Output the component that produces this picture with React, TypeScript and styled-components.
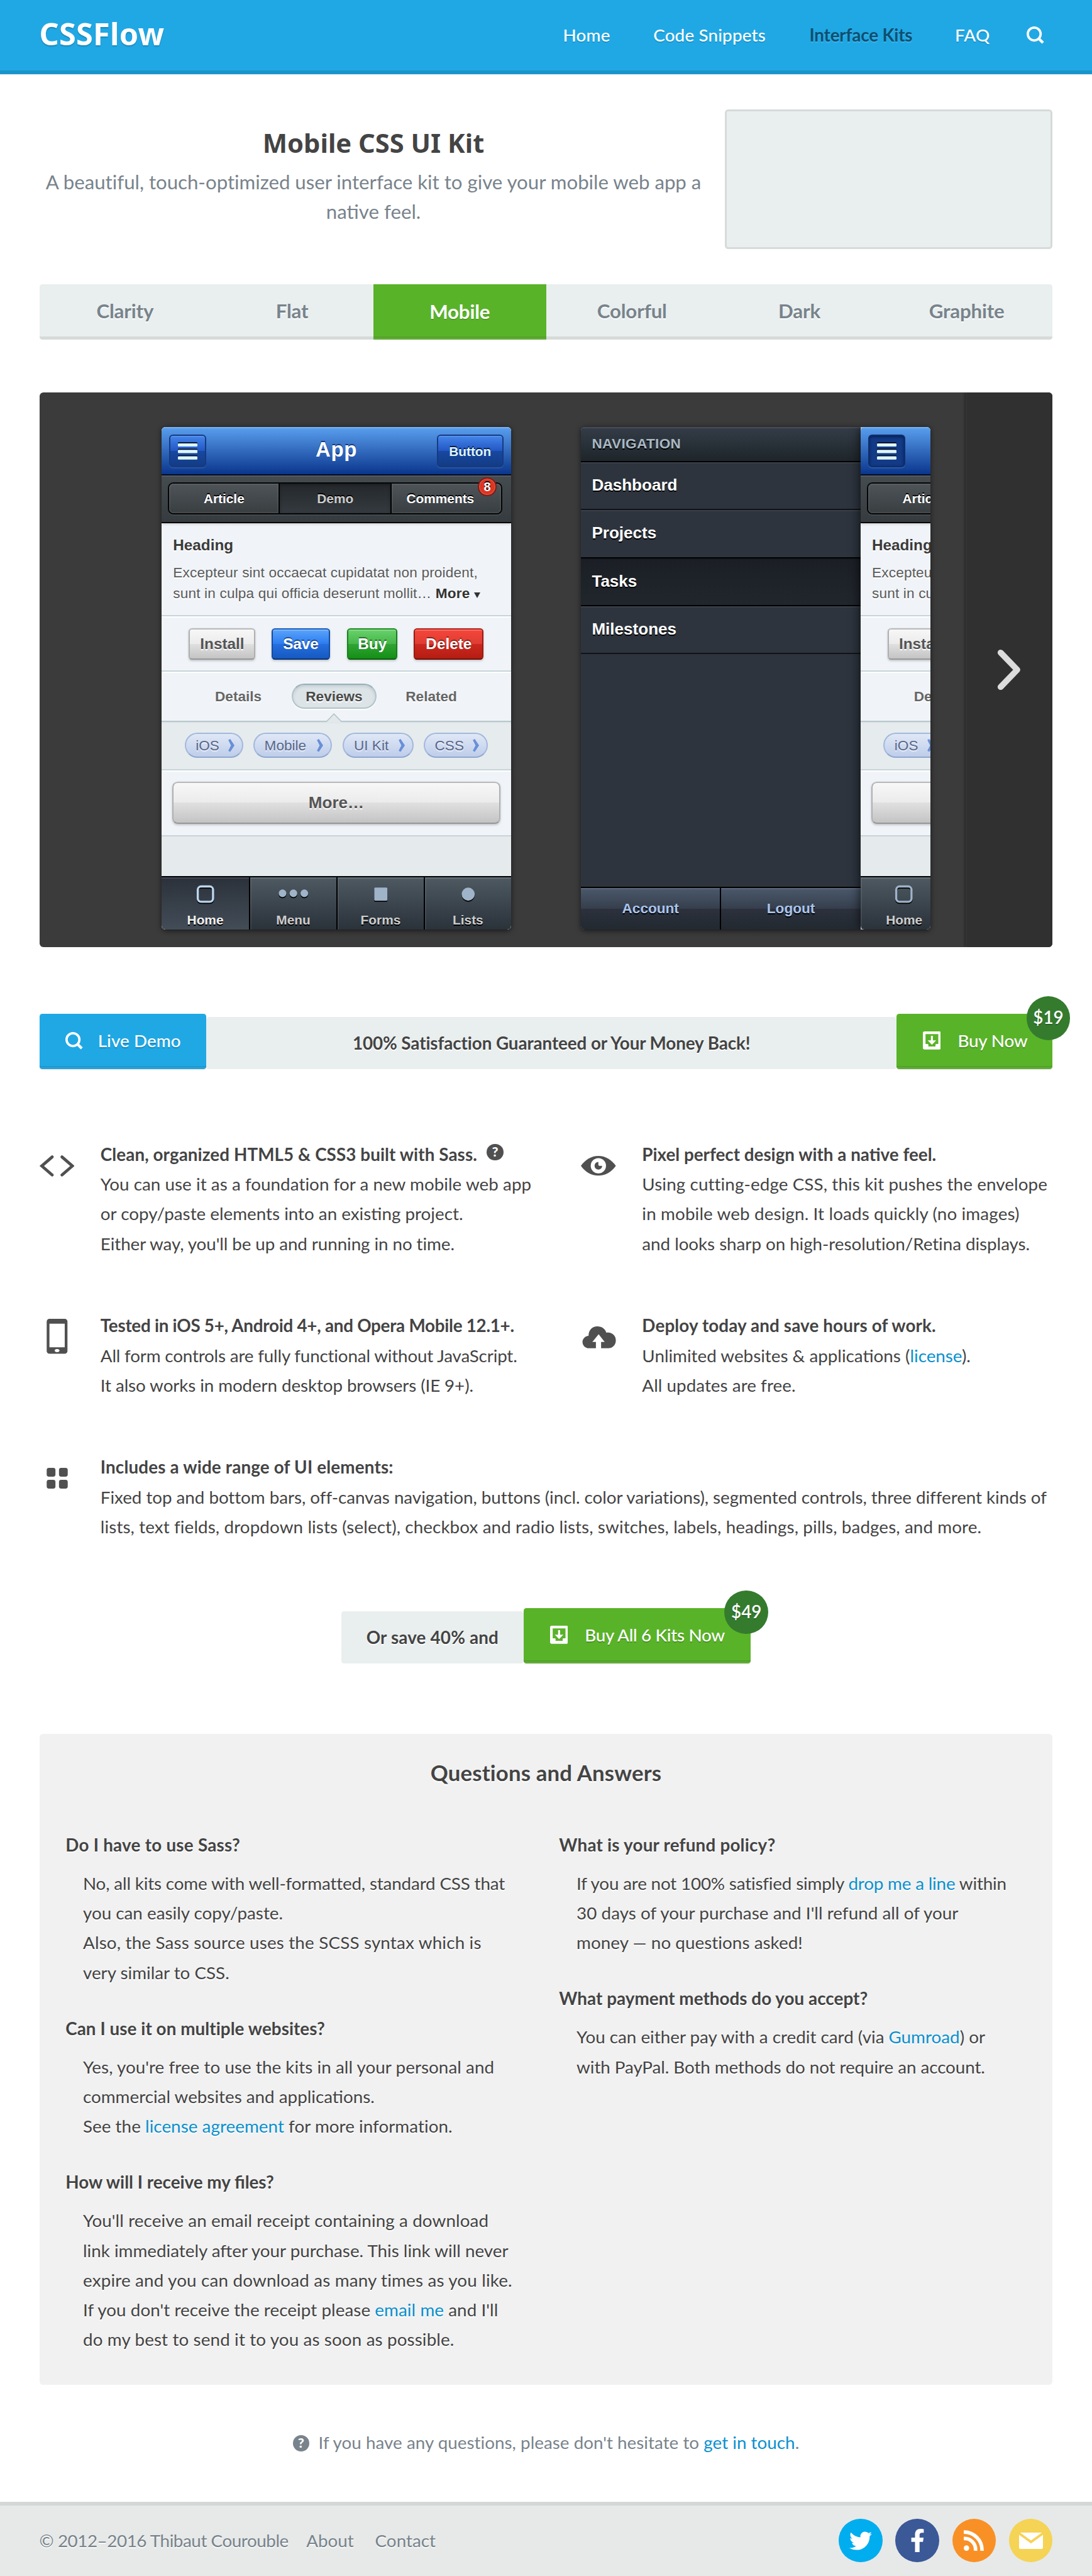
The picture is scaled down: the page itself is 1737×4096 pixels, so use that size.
import React from "react";
import styled, { createGlobalStyle, css } from "styled-components";
import { FaTwitter, FaFacebookF } from "react-icons/fa";

const sans = `Lato, "Open Sans", sans-serif`;
const display = `"Noto Sans", "Open Sans", sans-serif`;
const device = `"Liberation Sans", Arial, sans-serif`;

const GlobalStyle = createGlobalStyle`
  html { font-size: 8.685px; }
  *, *::before, *::after { box-sizing: border-box; }
  body {
    margin: 0;
    background: #fff;
    color: #444;
    font-family: ${sans};
    font-size: 3.2rem;
    line-height: 5.44rem;
    overflow-x: hidden;
  }
  h1, h2, h3, h4, p, ul, dl, dt, dd { margin: 0; padding: 0; font-size: inherit; }
  a { color: #0a90cf; text-decoration: none; }
  svg { display: block; flex: none; }
`;

/* One line of copy, with its tracking in hundredths of a rem. */
const Line = styled.span<{ $track?: number }>`
  display: block;
  white-space: nowrap;
  letter-spacing: ${(p) => (p.$track ?? 0) / 100}rem;
`;

/* ---------- site header ---------- */

const Header = styled.header`
  display: flex;
  align-items: center;
  justify-content: space-between;
  height: 13.6rem;
  padding: 0 8.8rem 0.8rem 7.2rem;
  background: #20a8e5;
  border-bottom: 0.8rem solid #1994cb;
  box-shadow: 0 0.2rem 0 #f2f5f6;
`;

const Logo = styled.a`
  margin-top: 0.2rem;
  color: #fff;
  font: 700 5.6rem/6rem ${display};
  letter-spacing: 0.03rem;
  text-shadow: 0 0.2rem 0.2rem rgba(0, 0, 0, 0.2);
`;

const HeaderNav = styled.nav`
  display: flex;
  align-items: center;
  margin-top: 0.8rem;
  height: 5.44rem;
`;

const HeaderLink = styled.a<{ $current?: boolean; $gap: number }>`
  margin-right: ${(p) => p.$gap}rem;
  white-space: nowrap;
  color: ${(p) => (p.$current ? "#0d4f70" : "#fff")};
  font-weight: ${(p) => (p.$current ? 700 : 500)};
  letter-spacing: ${(p) => (p.$current ? "-0.02rem" : "0.02rem")};
  text-shadow: ${(p) => (p.$current ? "0 0.2rem rgba(255, 255, 255, 0.15)" : "0 0.2rem rgba(0, 0, 0, 0.15)")};
`;

/* ---------- page body ---------- */

const Main = styled.main`
  padding: 6.4rem 7.2rem 0;
`;

const Hero = styled.section`
  display: flex;
  justify-content: space-between;
  height: 25.6rem;
  margin-bottom: 6.4rem;
`;

const HeroText = styled.div`
  width: 122.4rem;
  padding-top: 3.1rem;
  text-align: center;
`;

const HeroTitle = styled.h1`
  font: 700 4.8rem/6rem ${display};
  margin-bottom: 1.5rem;
`;

const Lead = styled.p`
  color: #78838c;
  font-size: 3.6rem;
  white-space: nowrap;
`;

const AdSlot = styled.aside`
  width: 60rem;
  height: 25.6rem;
  border: 0.4rem solid #d6dbda;
  border-radius: 0.6rem;
  background: #e9efee;
`;

const KitTabs = styled.nav`
  display: grid;
  grid-template-columns: 31.4fr 29.8fr 31.6fr 31.5fr 29.8fr 31.5fr;
  height: 10.2rem;
  margin-bottom: 9.6rem;
  border-radius: 0.5rem;
  overflow: hidden;
`;

const KitTab = styled.a<{ $active?: boolean }>`
  display: flex;
  align-items: center;
  justify-content: center;
  padding-top: ${(p) => (p.$active ? "0.2rem" : "0.4rem")};
  border-bottom: ${(p) => (p.$active ? "0.4rem solid #62ab3b" : "0.6rem solid #d6dbda")};
  background: ${(p) => (p.$active ? "#59b329" : "#e9efee")};
  box-shadow: ${(p) => (p.$active ? "inset 0 -0.2rem #52a127" : "none")};
  color: ${(p) => (p.$active ? "#fff" : "#78838c")};
  font-size: 3.6rem;
  font-weight: 700;
  letter-spacing: -0.02rem;
  text-shadow: ${(p) => (p.$active ? "0 0.2rem rgba(0, 0, 0, 0.15)" : "0 0.2rem rgba(255, 255, 255, 0.8)")};
`;

const Carousel = styled.section`
  display: flex;
  height: 101.6rem;
  padding-left: 22.4rem;
  border-radius: 0.7rem;
  background: #3b3b3b;
  overflow: hidden;
`;

const NextPanel = styled.button`
  display: flex;
  align-items: center;
  justify-content: center;
  width: 16rem;
  margin-left: auto;
  padding: 0;
  border: 0;
  background: #303030;
  box-shadow: -0.1rem 0 0.5rem rgba(0, 0, 0, 0.45), inset 0.2rem 0 #353535;
`;

/* ---------- phone mockups ---------- */

const Phone = styled.div<{ $second?: boolean }>`
  display: flex;
  flex: none;
  width: 64rem;
  height: 92rem;
  margin-top: 6.4rem;
  margin-left: ${(p) => (p.$second ? "12.8rem" : 0)};
  border-radius: 0.7rem;
  overflow: hidden;
  background: #e5eaed;
  box-shadow: 0 0.2rem 1rem rgba(0, 0, 0, 0.6);
  font: 2.6rem/3.8rem ${device};
`;

const Screen = styled.div`
  position: relative;
  flex: none;
  display: flex;
  flex-direction: column;
  width: 64rem;
  border-radius: 0.7rem;
  overflow: hidden;
  background: #e5eaed;
`;

const ScreenShade = styled.div`
  display: flex;
  border-radius: 0.7rem;
  box-shadow: 0 0 2rem rgba(0, 0, 0, 0.75);
`;

const TitleBar = styled.div`
  display: grid;
  grid-template-columns: 12.2rem 1fr 12.2rem;
  align-items: start;
  height: 8.8rem;
  padding: 1.4rem 1.4rem 0;
  border-bottom: 2px solid #020d25;
  background: linear-gradient(#5a9fef, #0a368d);
  box-shadow: inset 0 2px #7ab2f3;
`;

const BarTitle = styled.div`
  color: #fff;
  font-size: 3.8rem;
  font-weight: 700;
  letter-spacing: 0.06rem;
  line-height: 5.6rem;
  text-align: center;
  text-shadow: 0 -0.2rem rgba(4, 30, 90, 0.7);
`;

const BarButton = styled.div<{ $icon?: boolean; $pressed?: boolean }>`
  display: flex;
  align-items: center;
  justify-content: center;
  width: ${(p) => (p.$icon ? "6.8rem" : "12.2rem")};
  height: 6rem;
  border: 2px solid ${(p) => (p.$pressed ? "#0d2f6c" : "#163a80")};
  border-radius: 0.7rem;
  background: ${(p) =>
    p.$pressed ? "#123a86" : "linear-gradient(#4486ea, #2356c3 50%, #1848a1 50%, #133c84)"};
  box-shadow: ${(p) =>
    p.$pressed
      ? "inset 0 0.2rem 0.5rem rgba(0, 10, 50, 0.6), 0 0.2rem rgba(255, 255, 255, 0.12)"
      : "inset 0 0.2rem rgba(255, 255, 255, 0.12), 0 0.2rem rgba(255, 255, 255, 0.1)"};
  color: #dcf5fe;
  font-size: 2.4rem;
  font-weight: 700;
  text-shadow: 0 -0.2rem #071c47;
`;

const Toolbar = styled.div`
  position: relative;
  z-index: 1;
  height: 8.8rem;
  padding: 1.3rem 1.6rem 0 1.2rem;
  border-bottom: 2px solid #000;
  background: linear-gradient(#454c50, #353b3f);
  box-shadow: inset 0 2px #56595f, 0 0.2rem 0.4rem rgba(0, 0, 0, 0.25);
`;

const Segments = styled.div`
  display: flex;
  height: 5.9rem;
  border: 2px solid #050505;
  border-radius: 1rem;
  box-shadow: 0 0.2rem #474c52;
`;

const Segment = styled.div<{ $active?: boolean; $badge?: boolean }>`
  position: relative;
  flex: none;
  display: flex;
  align-items: center;
  justify-content: center;
  width: ${(p) => (p.$active ? 20.5 : p.$badge ? 20.2 : 20)}rem;
  padding-right: ${(p) => (p.$badge ? "2.2rem" : 0)};
  border-left: ${(p) => (p.$active || p.$badge ? "2px solid #000" : "0")};
  border-radius: ${(p) => (p.$active ? 0 : p.$badge ? "0 0.8rem 0.8rem 0" : "0.8rem 0 0 0.8rem")};
  background: ${(p) => (p.$active ? "linear-gradient(#24282c, #343a3f)" : "linear-gradient(#4e5458, #393e41)")};
  box-shadow: ${(p) =>
    p.$active ? "inset 0 0.2rem 0.6rem rgba(0,0,0,.3)" : "inset 0 0 0 0.2rem rgba(255, 255, 255, 0.07)"};
  color: ${(p) => (p.$active ? "#ccc" : "#fff")};
  font-size: 2.4rem;
  font-weight: 700;
  text-shadow: 0 -0.2rem #000;
`;

const Badge = styled.span`
  position: absolute;
  top: -1.1rem;
  right: 0.8rem;
  width: 3.4rem;
  height: 3.4rem;
  border: 2px solid #7d1d15;
  border-radius: 50%;
  background: #dc3522;
  box-shadow: inset 0 0 0 0.15rem rgba(255, 255, 255, 0.18);
  color: #fff;
  font-size: 2.3rem;
  line-height: 3rem;
  text-align: center;
`;

const Pane = styled.div<{ $h: number; $sunk?: boolean; $top: number; $left: number; $line?: string }>`
  position: relative;
  flex: none;
  display: flex;
  flex-wrap: nowrap;
  align-items: flex-start;
  height: ${(p) => p.$h}rem;
  padding: ${(p) => p.$top}rem 0 0 ${(p) => p.$left}rem;
  border-bottom: 2px solid ${(p) => p.$line ?? "#c7d4d9"};
  background: ${(p) => (p.$sunk ? "#e6ebed" : "#f0f4f8")};
  box-shadow: ${(p) => (p.$sunk ? "inset 0 0.2rem #dde3e6" : "inset 0 0.2rem #fff")};
`;

const Article = styled(Pane)`
  flex-direction: column;
  color: #5a5a5a;
  text-shadow: 0 0.2rem #fff;
  white-space: nowrap;
`;

const ArticleTitle = styled.h4`
  margin-bottom: 1.4rem;
  color: #3b3b3b;
  font-size: 2.8rem;
  line-height: 3.6rem;
`;

const MoreLink = styled.span`
  color: #333;
  font-weight: 700;
`;

const Caret = styled.i`
  display: inline-block;
  border: solid transparent;
  border-width: 1.1rem 0.6rem 0;
  border-top-color: #333;
  vertical-align: 0.1rem;
`;

const tones = {
  grey: css`
    border-color: #b9b9b9 #b0b0b0 #979797;
    background: linear-gradient(#f7f7f7, #ebebeb 50%, #e0e0e0 50%, #c4c4c4);
    color: #555;
    text-shadow: 0 0.2rem #fff;
  `,
  blue: css`
    border-color: #1b5fc0 #144c9f #0c3373;
    background: linear-gradient(#5aa4fb, #2c7cf0 50%, #256fe0 50%, #1659c0);
  `,
  green: css`
    border-color: #218c25 #19801d #0e5c12;
    background: linear-gradient(#68d26b, #45b649 50%, #32a336 50%, #139015);
  `,
  red: css`
    border-color: #b3251c #981b14 #701009;
    background: linear-gradient(#f6453a, #de3d33 50%, #cc281f 50%, #b51d12);
  `,
};

const PushButton = styled.span<{ $tone: keyof typeof tones; $w: number; $gap?: number; $big?: boolean }>`
  flex: none;
  display: flex;
  align-items: center;
  justify-content: center;
  width: ${(p) => p.$w}rem;
  height: ${(p) => (p.$big ? 7.8 : 5.8)}rem;
  margin-right: ${(p) => p.$gap ?? 0}rem;
  border: 2px solid;
  border-radius: ${(p) => (p.$big ? 1 : 0.6)}rem;
  box-shadow: inset 0 0.2rem rgba(255, 255, 255, 0.25), 0 0.2rem 0.4rem rgba(0, 0, 0, 0.2);
  color: #fff;
  font-size: ${(p) => (p.$big ? 3 : 2.8)}rem;
  font-weight: 700;
  text-shadow: 0 -0.2rem rgba(0, 0, 0, 0.45);
  ${(p) => tones[p.$tone]}
`;

const Pill = styled.span<{ $w: number; $gap?: number; $active?: boolean }>`
  position: relative;
  flex: none;
  display: flex;
  align-items: center;
  justify-content: center;
  width: ${(p) => p.$w}rem;
  height: 4.6rem;
  margin-right: ${(p) => p.$gap ?? 0}rem;
  border-radius: 2.3rem;
  color: ${(p) => (p.$active ? "#4a4a4a" : "#666")};
  font-weight: 700;
  text-shadow: 0 0.2rem #fff;
  ${(p) =>
    p.$active &&
    css`
      border: 2px solid #b0c4ca;
      border-top-color: #98b0b8;
      background: #dde4e7;
      box-shadow: inset 0 0.3rem 0.5rem rgba(80, 110, 120, 0.2), 0 0.2rem #fff;
    `}
`;

const PillPointer = styled.svg`
  position: absolute;
  top: 5.2rem;
  left: 50%;
  width: 2.8rem;
  height: 1.7rem;
  margin-left: -1.4rem;
  z-index: 2;
`;

const Tag = styled.span<{ $w: number; $gap?: number }>`
  flex: none;
  display: flex;
  align-items: center;
  justify-content: space-between;
  width: ${(p) => p.$w}rem;
  height: 4.6rem;
  margin-right: ${(p) => p.$gap ?? 0}rem;
  padding: 0 1.35rem 0 1.8rem;
  border: 2px solid #a2b8dd;
  border-bottom-color: #8ea7d2;
  border-radius: 2.3rem;
  background: linear-gradient(#dfe8f6, #bfcdea);
  color: #59678a;
  text-shadow: 0 0.2rem rgba(255, 255, 255, 0.6);
`;

const TabBar = styled.div`
  display: flex;
  height: 9.8rem;
  margin-top: auto;
  border-top: 2px solid #000;
`;

const TabItem = styled.div<{ $active?: boolean }>`
  flex: none;
  display: flex;
  flex-direction: column;
  align-items: center;
  justify-content: space-between;
  width: 16rem;
  padding: 1.4rem 0 0.2rem;
  background: ${(p) => (p.$active ? "linear-gradient(#2b313b, #434d57)" : "linear-gradient(#4e5961, #2a323a)")};
  box-shadow: inset 0 2px ${(p) => (p.$active ? "#454b54" : "#667079")},
    inset ${(p) => (p.$active ? "0 0" : "2px 0")} rgba(255, 255, 255, 0.08);
  color: ${(p) => (p.$active ? "#f0f0f0" : "#ccc")};
  font-size: 2.4rem;
  font-weight: 700;
  line-height: 3.2rem;
  text-shadow: 0 0.2rem #000;
  & + & {
    border-left: 2px solid #000;
  }
`;

const SideNav = styled.div`
  flex: none;
  display: flex;
  flex-direction: column;
  width: 51.2rem;
  background: #2d343e;
`;

const SideHeading = styled.div`
  height: 6.4rem;
  padding-left: 2rem;
  border-bottom: 2px solid #000;
  background: linear-gradient(#343d48, #1e252a);
  box-shadow: inset 0 2px #444d59;
  color: #a9b8c3;
  font-weight: 700;
  letter-spacing: 0.04rem;
  line-height: 6.2rem;
  text-shadow: 0 0.2rem #000;
`;

const SideItem = styled.div<{ $active?: boolean; $dark?: boolean }>`
  height: 8.8rem;
  padding-left: 2rem;
  border-bottom: 2px solid ${(p) => (p.$dark ? "#000" : "#121314")};
  background: ${(p) => (p.$active ? "linear-gradient(#1b1e25, #21262d)" : "#2d343e")};
  box-shadow: inset 0 2px ${(p) => (p.$active ? "#181b21" : "#3a404a")};
  color: #fff;
  font-size: 3rem;
  font-weight: 700;
  line-height: 8.4rem;
  text-shadow: 0 0.2rem #000;
`;

const SideActions = styled.div`
  display: flex;
  height: 7.8rem;
  margin-top: auto;
  border-top: 2px solid #000;
`;

const SideAction = styled.div`
  flex: 1;
  border-right: 2px solid #000;
  background: linear-gradient(#4b596c, #353e4c 50%, #2c313d 50%, #222930);
  box-shadow: inset 0 2px #5b6879;
  color: #aac5ee;
  font-weight: 700;
  line-height: 7.6rem;
  text-align: center;
  text-shadow: 0 0.2rem #000;
  &:last-child {
    border-right: 0;
  }
`;

const Bars = () => (
  <svg viewBox="0 0 36 32" width="31" height="28">
    {[0, 12, 24].map((y) => (
      <g key={y}>
        <rect y={y} width="36" height="6" rx="1.5" fill="#020a1c" />
        <rect y={y + 2} width="36" height="6" rx="1.5" fill="#dcf5fe" />
      </g>
    ))}
  </svg>
);

const Chevron = () => (
  <svg viewBox="0 0 12 24" width="10.5" height="20.5">
    <path d="M0 2 3.6 0 11.6 12 3.6 24 0 22 5 12Z" fill="#6890d8" />
  </svg>
);

const glyph = "#9fb3c9";
const tabs = [
  {
    label: "Home",
    icon: (c: string) => (
      <>
        <rect x="26" y="5" width="28" height="28" rx="6" fill="none" stroke="#000" strokeWidth="4" />
        <rect x="26" y="3" width="28" height="28" rx="6" fill="none" stroke={c} strokeWidth="4" />
      </>
    ),
  },
  {
    label: "Menu",
    icon: (c: string) => (
      <>
        {[20, 40, 60].map((x) => (
          <g key={x}>
            <circle cx={x} cy="17.5" r="7" fill="#000" />
            <circle cx={x} cy="15.5" r="7" fill={c} />
          </g>
        ))}
      </>
    ),
  },
  {
    label: "Forms",
    icon: (c: string) => (
      <>
        <rect x="28" y="7" width="24" height="24" rx="2" fill="#000" />
        <rect x="28" y="5" width="24" height="24" rx="2" fill={c} />
      </>
    ),
  },
  {
    label: "Lists",
    icon: (c: string) => (
      <>
        <circle cx="40" cy="19" r="12" fill="#000" />
        <circle cx="40" cy="17" r="12" fill={c} />
      </>
    ),
  },
];

const buttons = [
  { label: "Install", tone: "grey", w: 12.2, gap: 3 },
  { label: "Save", tone: "blue", w: 10.6, gap: 3.2 },
  { label: "Buy", tone: "green", w: 9.2, gap: 3 },
  { label: "Delete", tone: "red", w: 12.8, gap: 0 },
] as const;

const tags = [
  { label: "iOS", w: 10.8, gap: 1.8 },
  { label: "Mobile", w: 14.4, gap: 2 },
  { label: "UI Kit", w: 13, gap: 1.8 },
  { label: "CSS", w: 11.8, gap: 0 },
];

/* The demo application. When the navigation drawer is open only its left edge stays in view. */
function DemoApp({ drawerOpen = false }: { drawerOpen?: boolean }) {
  const shown = <T,>(list: readonly T[]) => (drawerOpen ? list.slice(0, 1) : list);
  return (
    <Screen>
      <TitleBar>
        <BarButton $icon $pressed={drawerOpen}>
          <Bars />
        </BarButton>
        {!drawerOpen && (
          <>
            <BarTitle>App</BarTitle>
            <BarButton>Button</BarButton>
          </>
        )}
      </TitleBar>
      <Toolbar>
        <Segments>
          <Segment>Article</Segment>
          {!drawerOpen && (
            <>
              <Segment $active>Demo</Segment>
              <Segment $badge>
                Comments<Badge>8</Badge>
              </Segment>
            </>
          )}
        </Segments>
      </Toolbar>
      <Article $h={17} $top={2.2} $left={2.1}>
        <ArticleTitle>Heading</ArticleTitle>
        <Line $track={2.2}>Excepteur sint occaecat cupidatat non proident,</Line>
        <Line $track={2}>
          sunt in culpa qui officia deserunt mollit…{" "}
          {!drawerOpen && (
            <MoreLink>
              More <Caret />
            </MoreLink>
          )}
        </Line>
      </Article>
      <Pane $h={10.2} $top={2.2} $left={5}>
        {shown(buttons).map((b) => (
          <PushButton key={b.label} $tone={b.tone} $w={b.w} $gap={b.gap}>
            {b.label}
          </PushButton>
        ))}
      </Pane>
      <Pane $h={9.2} $top={2.2} $left={7.1} $line="#b6c8cd">
        <Pill $w={13.9} $gap={2.8}>
          Details
        </Pill>
        {!drawerOpen && (
          <>
            <Pill $w={15.6} $gap={2.6} $active>
              Reviews
              <PillPointer viewBox="0 0 28 17">
                <path d="M0 17 0 15.8 14 0 28 15.8V17Z" fill="#e3e9eb" />
                <path d="M0 15.8 14 1.4 28 15.8" fill="none" stroke="#b6c8cd" strokeWidth="2" />
              </PillPointer>
            </Pill>
            <Pill $w={14.8}>Related</Pill>
          </>
        )}
      </Pane>
      <Pane $h={8.8} $top={2} $left={4.2} $sunk>
        {shown(tags).map((t) => (
          <Tag key={t.label} $w={t.w} $gap={t.gap}>
            {t.label}
            <Chevron />
          </Tag>
        ))}
      </Pane>
      <Pane $h={12.2} $top={2.1} $left={2}>
        <PushButton $tone="grey" $w={60} $big>
          {drawerOpen ? "" : "More…"}
        </PushButton>
      </Pane>
      <TabBar>
        {shown(tabs).map((t, i) => {
          const active = i === 0 && !drawerOpen;
          return (
            <TabItem key={t.label} $active={active}>
              <svg viewBox="0 0 80 40" width="69.5" height="34.7">
                {t.icon(active ? "#bcd6ef" : glyph)}
              </svg>
              {t.label}
            </TabItem>
          );
        })}
      </TabBar>
    </Screen>
  );
}

/* ---------- call to action bars ---------- */

const OfferBar = styled.section<{ $centered?: boolean }>`
  display: flex;
  justify-content: center;
  align-items: flex-end;
  height: 10.2rem;
  margin-top: ${(p) => (p.$centered ? 12.16 : 12.2)}rem;
`;

const OfferText = styled.div<{ $w?: number }>`
  flex: ${(p) => (p.$w ? "none" : 1)};
  width: ${(p) => (p.$w ? `${p.$w}rem` : "auto")};
  height: 9.6rem;
  border-radius: 0.5rem;
  background: #e9efee;
  font-weight: 700;
  letter-spacing: ${(p) => (p.$w ? 0.02 : -0.01)}rem;
  line-height: 9.6rem;
  text-align: center;
  text-shadow: 0 0.2rem #fff;
`;

const ActionButton = styled.a<{ $tone: "blue" | "green"; $w: number; $track?: number }>`
  position: relative;
  flex: none;
  display: flex;
  align-items: center;
  gap: ${(p) => (p.$tone === "blue" ? 2.7 : 3.1)}rem;
  width: ${(p) => p.$w}rem;
  height: 10.2rem;
  padding: 0 0 0 4.8rem;
  border-bottom: 0.4rem solid ${(p) => (p.$tone === "blue" ? "#2f9fd4" : "#62ab3b")};
  border-radius: 0.5rem;
  background: ${(p) => (p.$tone === "blue" ? "#20a8e5" : "#59b329")};
  box-shadow: inset 0 -0.2rem ${(p) => (p.$tone === "blue" ? "#1d98cf" : "#509f26")}, 0 0.2rem rgba(0, 0, 0, 0.05);
  color: #fff;
  font-weight: 500;
  letter-spacing: ${(p) => (p.$track ?? 0) / 100}rem;
  white-space: nowrap;
  text-shadow: 0 0.2rem rgba(0, 0, 0, 0.2);
`;

const Price = styled.span`
  position: absolute;
  top: -3.2rem;
  right: -3.2rem;
  width: 8rem;
  height: 8rem;
  border-radius: 50%;
  background: #347b2e;
  font-weight: 600;
  line-height: 7.8rem;
  text-align: center;
  letter-spacing: 0;
`;

const SearchIcon = () => (
  <svg viewBox="0 0 32 32" width="28" height="28" fill="none" stroke="#fff">
    <circle cx="13.8" cy="13.8" r="11.7" strokeWidth="4.2" />
    <path d="m22.5 22.5 7.3 7.3" strokeWidth="5" />
  </svg>
);

const DownloadIcon = () => (
  <svg viewBox="0 0 33 33" width="28.7" height="28.7">
    <path
      fill="#fff"
      fillRule="evenodd"
      d="M3 0h27a3 3 0 0 1 3 3v27a3 3 0 0 1-3 3H3a3 3 0 0 1-3-3V3a3 3 0 0 1 3-3Zm1.8 5v18h3.7a1.5 1.5 0 0 1 1.5 1.5v3h13v-3a1.5 1.5 0 0 1 1.5-1.5h3.7V5Z"
    />
    <path fill="#fff" d="M14.7 8h3.6v8.3h6L16.5 24.5 8.7 16.3h6Z" />
  </svg>
);

/* ---------- features ---------- */

const Features = styled.section`
  display: grid;
  grid-template-columns: 99.2rem 1fr;
  row-gap: 9.4rem;
  margin-top: 12.64rem;
`;

const Feature = styled.article<{ $wide?: boolean; $iconTop: number }>`
  display: flex;
  grid-column: ${(p) => (p.$wide ? "1 / -1" : "auto")};
  & > svg {
    margin-top: ${(p) => p.$iconTop}rem;
    margin-right: 4.8rem;
  }
  & > div {
    padding-top: 0.2rem;
  }
`;

const FeatureTitle = styled.h3<{ $track?: number }>`
  display: flex;
  font-weight: 700;
  letter-spacing: ${(p) => (p.$track ?? 0) / 100}rem;
  white-space: nowrap;
`;

const HelpDot = styled.span<{ $muted?: boolean }>`
  display: inline-flex;
  align-items: center;
  justify-content: center;
  width: 3rem;
  height: 3rem;
  margin: ${(p) => (p.$muted ? "1.4rem 1.7rem 0 0" : "0.8rem 0 0 1.8rem")};
  border-radius: 50%;
  background: ${(p) => (p.$muted ? "#78838c" : "#505050")};
  color: #fff;
  font-size: 2.5rem;
  font-weight: 900;
  line-height: 1;
`;

const icon = { viewBox: "0 0 64 64", width: 55.6, height: 55.6 };

const CodeIcon = () => (
  <svg {...icon} fill="none" stroke="#505050" strokeWidth="5.4">
    <path d="M23 3 4 19.5 23 36M41 3l19 16.5L41 36" strokeLinejoin="miter" strokeLinecap="round" />
  </svg>
);

const EyeIcon = () => (
  <svg {...icon}>
    <path d="M0 18C8 7 19 0 32 0s24 7 32 18C56 29 45 36 32 36S8 29 0 18Z" fill="#505050" />
    <circle cx="32" cy="18" r="14" fill="#fff" />
    <path d="M32 11a7 7 0 1 0 7 7h-5a2 2 0 0 1-2-2Z" fill="#505050" />
  </svg>
);

const PhoneIcon = () => (
  <svg {...icon}>
    <path
      fill="#505050"
      fillRule="evenodd"
      d="M18 0h28a5 5 0 0 1 5 5v54a5 5 0 0 1-5 5H18a5 5 0 0 1-5-5V5a5 5 0 0 1 5-5Zm0 9v43h28V9Zm14 46.3a4.5 2.8 0 1 0 .01 0Z"
    />
  </svg>
);

const CloudIcon = () => (
  <svg {...icon}>
    <path
      fill="#505050"
      d="M12 40A11.500 11.500 0 0 1 12 17.500Q13 17.300 14 17.500C14 6.500 21 0 30 0c8.500 0 14.500 4.500 16.500 11.500C57 10 64 17 64 25.500 64 34 58 40 50 40H37V28.500h6.500L32.500 14.500 21 28.500h6.500V40Z"
    />
  </svg>
);

const GridIcon = () => (
  <svg {...icon} fill="#505050">
    {[13, 35.5].map((x) =>
      [0, 22].map((y) => <rect key={`${x}-${y}`} x={x} y={y} width="16" height="16" rx="4" />)
    )}
  </svg>
);

/* ---------- questions ---------- */

const Faq = styled.section`
  height: 119.2rem;
  margin-top: 12.8rem;
  padding: 4.4rem 4.8rem 0;
  border-radius: 0.6rem;
  background: #f1f1f1;
  text-shadow: 0 0.2rem #fff;
`;

const FaqTitle = styled.h2`
  margin-bottom: 7.8rem;
  font-size: 4rem;
  font-weight: 700;
  letter-spacing: 0.02rem;
  text-align: center;
`;

const FaqColumns = styled.div`
  display: grid;
  grid-template-columns: 90.4rem 1fr;
  align-items: start;
`;

const Answers = styled.dl`
  & > dt {
    margin-bottom: 1.6rem;
    font-weight: 700;
  }
  & > dd {
    margin: 0 0 4.8rem 3.2rem;
  }
`;

const Note = styled.p`
  display: flex;
  justify-content: center;
  align-items: flex-start;
  margin: 7.84rem 0 8.12rem;
  color: #78838c;
`;

/* ---------- footer ---------- */

const Footer = styled.footer`
  display: flex;
  align-items: center;
  height: 13.6rem;
  padding: 0 7.2rem;
  border-top: 0.8rem solid #d3d8d6;
  background: #e6e9e8;
  color: #78838c;
  text-shadow: 0 0.2rem rgba(255, 255, 255, 0.8);
`;

const Copyright = styled.span`
  width: 48.9rem;
  white-space: nowrap;
  letter-spacing: -0.05rem;
`;

const FooterLink = styled.a`
  margin-right: 3.9rem;
  color: inherit;
`;

const Socials = styled.div`
  display: flex;
  gap: 2.4rem;
  margin-left: auto;
`;

const Social = styled.a<{ $color: string }>`
  display: flex;
  align-items: center;
  justify-content: center;
  width: 8rem;
  height: 8rem;
  border-radius: 50%;
  background: ${(p) => p.$color};
  color: #fff;
`;

export default function App() {
  return (
    <>
      <GlobalStyle />
      <Header>
        <Logo>CSSFlow</Logo>
        <HeaderNav>
          <HeaderLink $gap={7.9}>Home</HeaderLink>
          <HeaderLink $gap={8}>Code Snippets</HeaderLink>
          <HeaderLink $gap={7.8} $current>
            Interface Kits
          </HeaderLink>
          <HeaderLink $gap={6.7}>FAQ</HeaderLink>
          <SearchIcon />
        </HeaderNav>
      </Header>
      <Main>
        <Hero>
          <HeroText>
            <HeroTitle>Mobile CSS UI Kit</HeroTitle>
            <Lead>
              <Line $track={-0.4}>
                A beautiful, touch-optimized user interface kit to give your mobile web app a
              </Line>
              <Line>native feel.</Line>
            </Lead>
          </HeroText>
          <AdSlot />
        </Hero>
        <KitTabs>
          {["Clarity", "Flat", "Mobile", "Colorful", "Dark", "Graphite"].map((name) => (
            <KitTab key={name} $active={name === "Mobile"}>
              {name}
            </KitTab>
          ))}
        </KitTabs>
        <Carousel>
          <Phone>
            <DemoApp />
          </Phone>
          <Phone $second>
            <SideNav>
              <SideHeading>NAVIGATION</SideHeading>
              <SideItem>Dashboard</SideItem>
              <SideItem $dark>Projects</SideItem>
              <SideItem $active $dark>
                Tasks
              </SideItem>
              <SideItem>Milestones</SideItem>
              <SideActions>
                <SideAction>Account</SideAction>
                <SideAction>Logout</SideAction>
              </SideActions>
            </SideNav>
            <ScreenShade>
              <DemoApp drawerOpen />
            </ScreenShade>
          </Phone>
          <NextPanel aria-label="Next">
            <svg viewBox="0 0 44 76" width="38.2" height="66" fill="none" stroke="#dcdcdc" strokeWidth="11">
              <path d="M6.5 6.5 37 38 6.5 69.5" strokeLinecap="round" strokeLinejoin="round" />
            </svg>
          </NextPanel>
        </Carousel>

        <OfferBar>
          <ActionButton $tone="blue" $w={30.6} $track={1}>
            <SearchIcon />
            Live Demo
          </ActionButton>
          <OfferText>100% Satisfaction Guaranteed or Your Money Back!</OfferText>
          <ActionButton $tone="green" $w={28.6} $track={-2}>
            <DownloadIcon />
            Buy Now
            <Price>$19</Price>
          </ActionButton>
        </OfferBar>

        <Features>
          <Feature $iconTop={3.03}>
            <CodeIcon />
            <div>
              <FeatureTitle $track={1}>
                Clean, organized HTML5 &amp; CSS3 built with Sass.
                <HelpDot>?</HelpDot>
              </FeatureTitle>
              <Line $track={0.5}>You can use it as a foundation for a new mobile web app</Line>
              <Line>or copy/paste elements into an existing project.</Line>
              <Line $track={-1}>Either way, you'll be up and running in no time.</Line>
            </div>
          </Feature>
          <Feature $iconTop={3.15}>
            <EyeIcon />
            <div>
              <FeatureTitle>Pixel perfect design with a native feel.</FeatureTitle>
              <Line $track={1.2}>Using cutting-edge CSS, this kit pushes the envelope</Line>
              <Line $track={1.5}>in mobile web design. It loads quickly (no images)</Line>
              <Line $track={-0.6}>and looks sharp on high-resolution/Retina displays.</Line>
            </div>
          </Feature>
          <Feature $iconTop={1.7}>
            <PhoneIcon />
            <div>
              <FeatureTitle $track={-3}>Tested in iOS 5+, Android 4+, and Opera Mobile 12.1+.</FeatureTitle>
              <Line $track={-2}>All form controls are fully functional without JavaScript.</Line>
              <Line $track={-1.2}>It also works in modern desktop browsers (IE 9+).</Line>
            </div>
          </Feature>
          <Feature $iconTop={3}>
            <CloudIcon />
            <div>
              <FeatureTitle $track={1.5}>Deploy today and save hours of work.</FeatureTitle>
              <Line>
                Unlimited websites &amp; applications (<a>license</a>).
              </Line>
              <Line $track={0.5}>All updates are free.</Line>
            </div>
          </Feature>
          <Feature $wide $iconTop={3}>
            <GridIcon />
            <div>
              <FeatureTitle $track={2}>Includes a wide range of UI elements:</FeatureTitle>
              <Line $track={-0.5}>
                Fixed top and bottom bars, off-canvas navigation, buttons (incl. color variations), segmented
                controls, three different kinds of
              </Line>
              <Line $track={1.2}>
                lists, text fields, dropdown lists (select), checkbox and radio lists, switches, labels, headings,
                pills, badges, and more.
              </Line>
            </div>
          </Feature>
        </Features>

        <OfferBar $centered>
          <OfferText $w={33.4}>Or save 40% and</OfferText>
          <ActionButton $tone="green" $w={41.6} $track={-3.5}>
            <DownloadIcon />
            Buy All 6 Kits Now
            <Price>$49</Price>
          </ActionButton>
        </OfferBar>

        <Faq>
          <FaqTitle>Questions and Answers</FaqTitle>
          <FaqColumns>
            <Answers>
              <dt>
                <Line $track={3}>Do I have to use Sass?</Line>
              </dt>
              <dd>
                <Line $track={-1.8}>No, all kits come with well-formatted, standard CSS that</Line>
                <Line>you can easily copy/paste.</Line>
                <Line $track={2}>Also, the Sass source uses the SCSS syntax which is</Line>
                <Line>very similar to CSS.</Line>
              </dd>
              <dt>
                <Line $track={0.8}>Can I use it on multiple websites?</Line>
              </dt>
              <dd>
                <Line $track={0.6}>Yes, you're free to use the kits in all your personal and</Line>
                <Line>commercial websites and applications.</Line>
                <Line $track={0.5}>
                  See the <a>license agreement</a> for more information.
                </Line>
              </dd>
              <dt>
                <Line>How will I receive my files?</Line>
              </dt>
              <dd>
                <Line $track={1.2}>You'll receive an email receipt containing a download</Line>
                <Line>link immediately after your purchase. This link will never</Line>
                <Line $track={2}>expire and you can download as many times as you like.</Line>
                <Line $track={0.8}>
                  If you don't receive the receipt please <a>email me</a> and I'll
                </Line>
                <Line $track={1.5}>do my best to send it to you as soon as possible.</Line>
              </dd>
            </Answers>
            <Answers>
              <dt>
                <Line $track={2.5}>What is your refund policy?</Line>
              </dt>
              <dd>
                <Line $track={-2}>
                  If you are not 100% satisfied simply <a>drop me a line</a> within
                </Line>
                <Line $track={0.5}>30 days of your purchase and I'll refund all of your</Line>
                <Line $track={0.6}>money — no questions asked!</Line>
              </dd>
              <dt>
                <Line $track={0.5}>What payment methods do you accept?</Line>
              </dt>
              <dd>
                <Line>
                  You can either pay with a credit card (via <a>Gumroad</a>) or
                </Line>
                <Line $track={-0.8}>with PayPal. Both methods do not require an account.</Line>
              </dd>
            </Answers>
          </FaqColumns>
        </Faq>

        <Note>
          <HelpDot $muted>?</HelpDot>
          <Line $track={0.3}>
            If you have any questions, please don't hesitate to <a>get in touch</a>.
          </Line>
        </Note>
      </Main>
      <Footer>
        <Copyright>© 2012–2016 Thibaut Courouble</Copyright>
        <FooterLink>About</FooterLink>
        <FooterLink>Contact</FooterLink>
        <Socials>
          <Social $color="#00adef">
            <FaTwitter size={36} />
          </Social>
          <Social $color="#3b5897">
            <FaFacebookF size={37} />
          </Social>
          <Social $color="#f99026">
            <svg viewBox="0 0 37 38" width="32" height="33" fill="none" stroke="#fff" strokeWidth="6.5">
              <circle cx="5" cy="33" r="5" fill="#fff" stroke="none" />
              <path d="M0 15.5A20 20 0 0 1 21.5 38M0 3.5A33 33 0 0 1 33.5 38" />
            </svg>
          </Social>
          <Social $color="#f5d355">
            <svg viewBox="0 0 44 30" width="38" height="26" fill="#fff">
              <path d="M2 0h40l-20 14.5Z" />
              <path d="M0 4 22 20 44 4v23.5a2.5 2.5 0 0 1-2.5 2.5h-39A2.5 2.5 0 0 1 0 27.5Z" />
            </svg>
          </Social>
        </Socials>
      </Footer>
    </>
  );
}
